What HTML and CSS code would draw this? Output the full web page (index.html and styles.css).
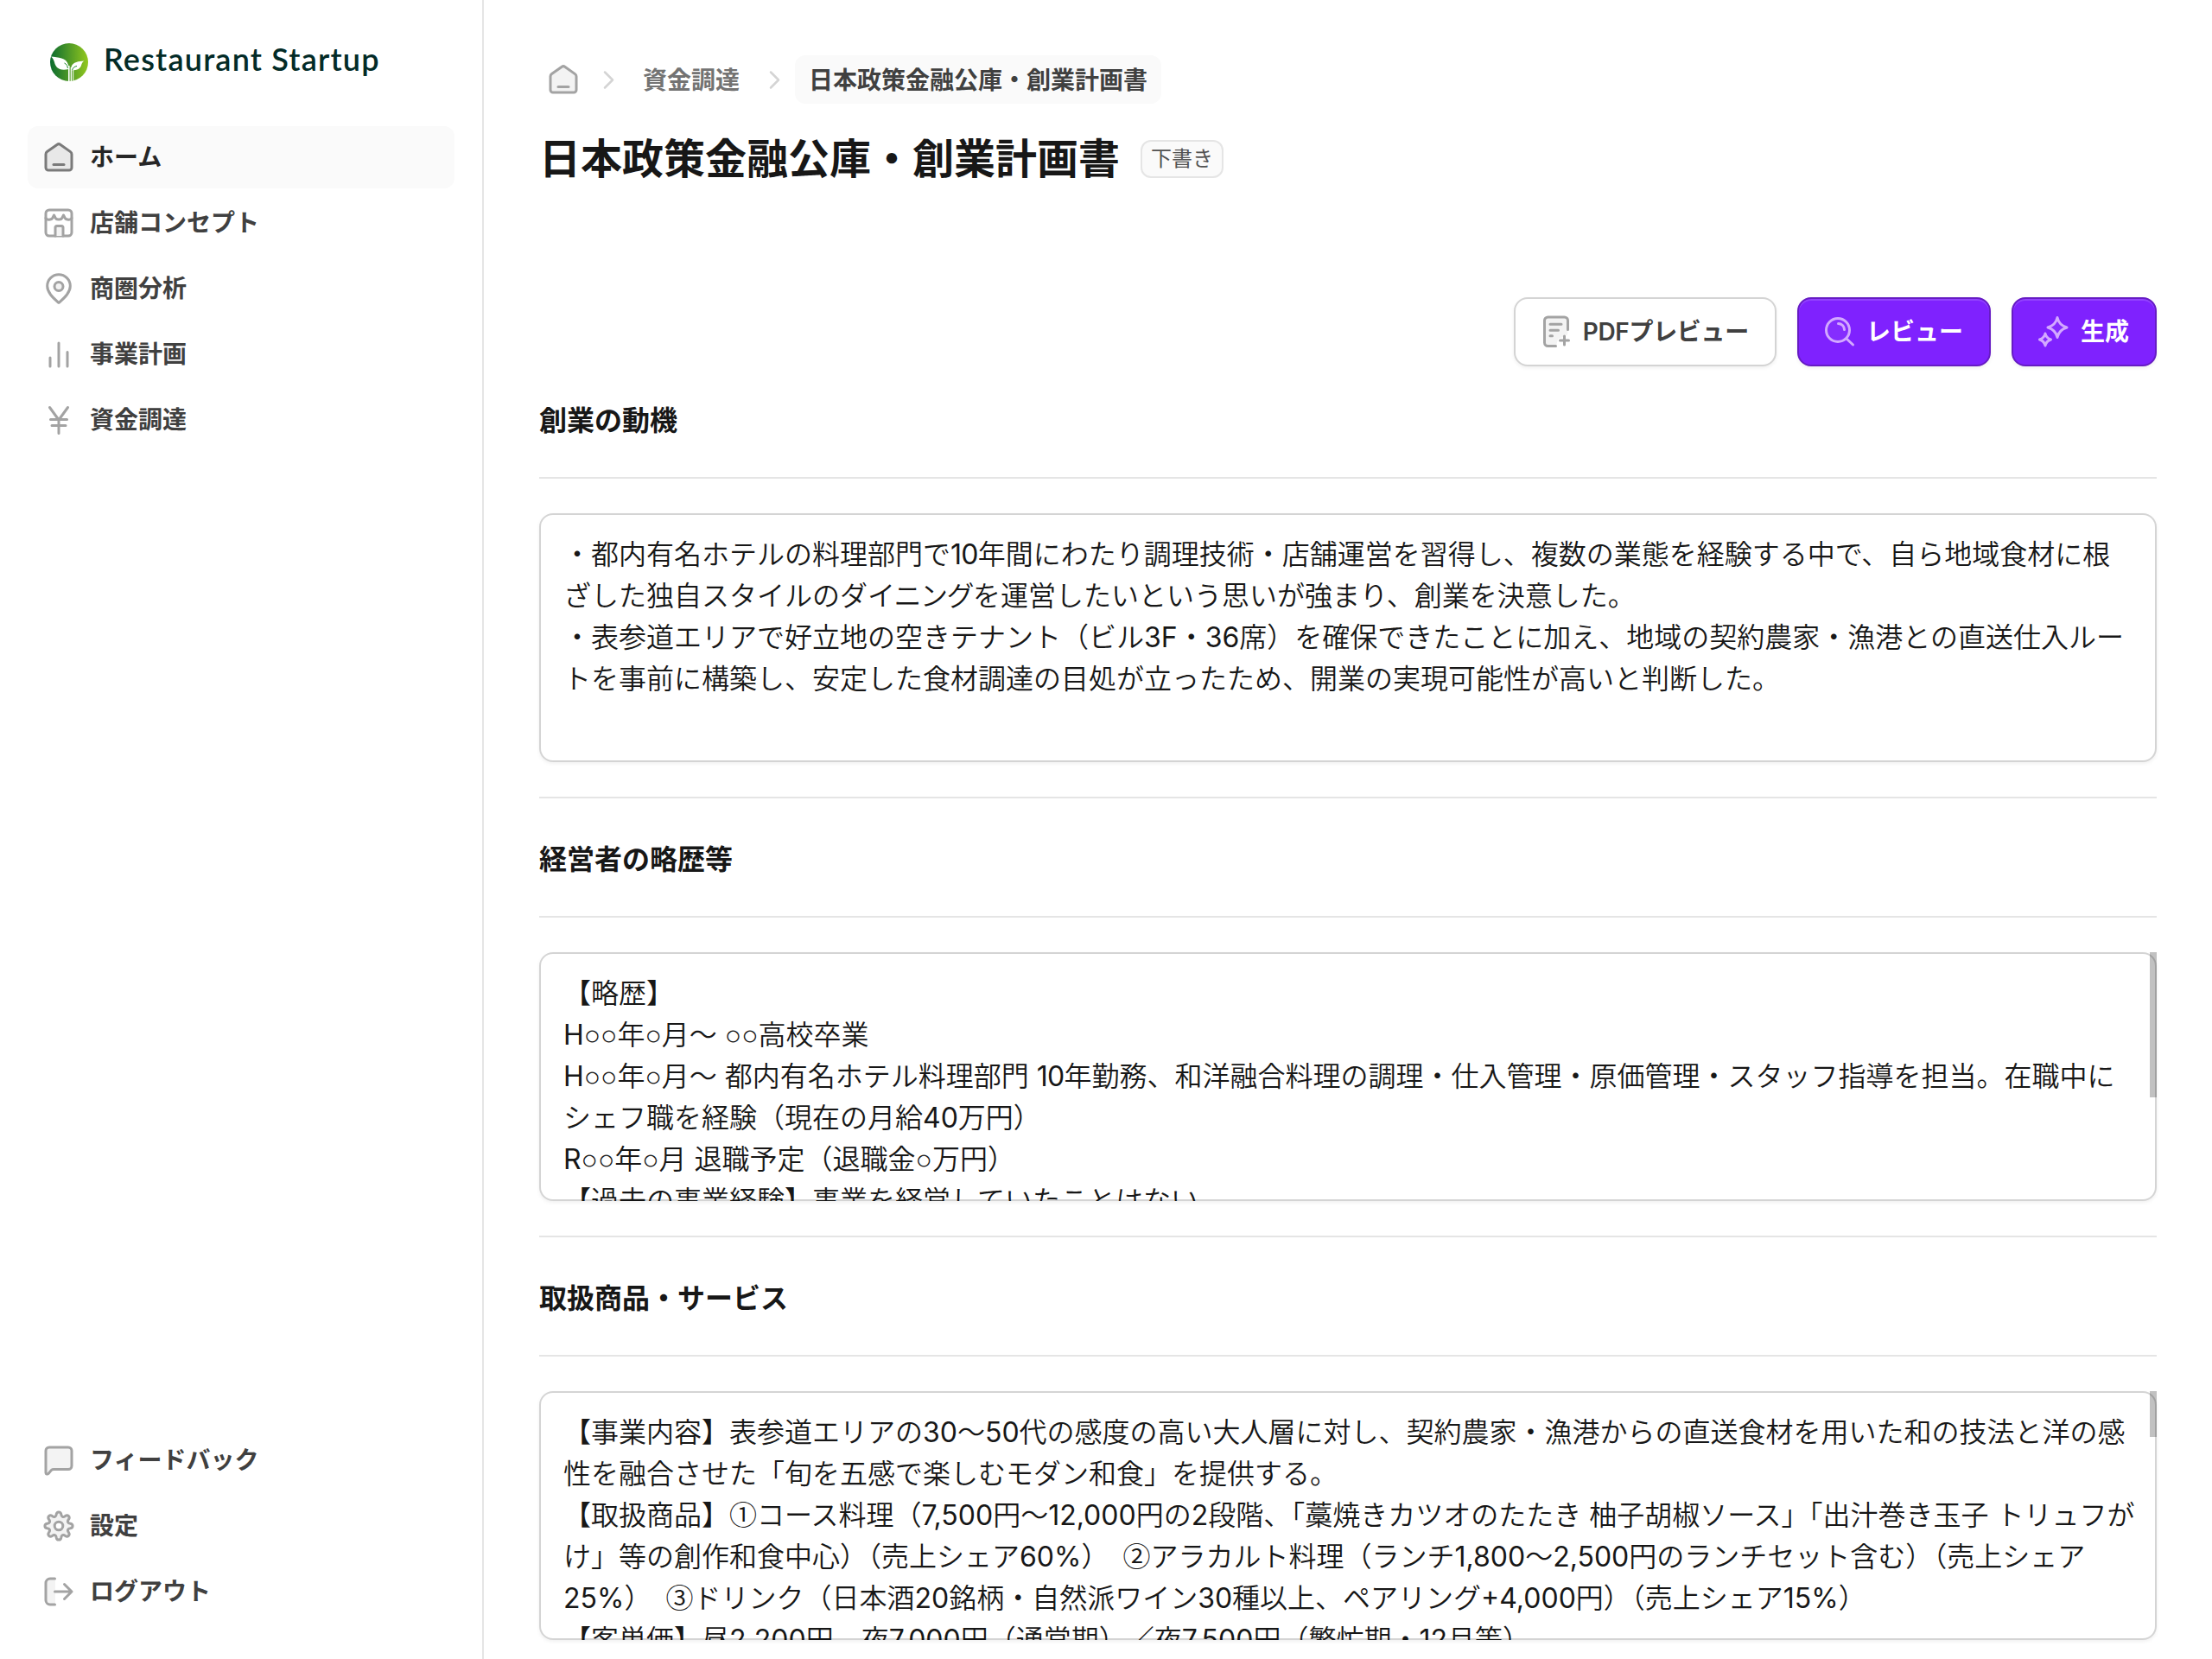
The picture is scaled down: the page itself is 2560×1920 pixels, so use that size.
FILE: index.html
```html
<!DOCTYPE html>
<html lang="ja">
<head>
    <meta charset="UTF-8">
    <meta name="viewport" content="width=device-width, initial-scale=1.0">
    <title>日本政策金融公庫・創業計画書 | Restaurant Startup</title>
    <link rel="stylesheet" href="styles.css">
</head>
<body>
    <div class="layout">
        <aside class="sidebar">
            <a class="brand" href="#">
                <svg class="brand-logo" viewBox="0 0 44 44">
                    <defs>
                        <linearGradient id="leaf" x1="0" y1="0" x2="1" y2="0">
                            <stop offset="0" stop-color="#0b6b2f"/>
                            <stop offset="1" stop-color="#93c81e"/>
                        </linearGradient>
                    </defs>
                    <circle cx="22" cy="22" r="22" fill="url(#leaf)"/>
                    <path fill="#fff" d="M1 15.500c8 1 18 1 20 9.500.5 2 .6 3.500.6 5C10 33 6 27 5 22c-.8-3-2-5-4-6.500z"/>
                    <path fill="#fff" d="M39.500 20.500c-6 .5-13.500 1-15 7-.3 1.300-.4 2.200-.4 3.500 8.500 1.500 11.500-3 12.200-6.200.6-2 1.500-3.500 3.200-4.300z"/>
                    <path fill="#fff" d="M21 26h1.600v18H21zM23.700 28h1.300v16h-1.300zM26.200 30h1v13.500h-1z"/>
                    <path fill="none" stroke="#1f8a2c" stroke-width="1" d="M16.500 23c2.500 1.200 3.700 3 3.900 6M31 26.500c-2.700.5-4.600 1.700-5.400 4.500"/>
                </svg>
                <span class="brand-name">Restaurant Startup</span>
            </a>
            <nav class="nav">
                <a class="nav-item active" href="#">
                    <svg class="icon" viewBox="0 0 40 40"><path d="M5 16.500c0-1.200.5-2.200 1.500-2.900L18.300 5.200c1-.7 2.400-.7 3.400 0l11.800 8.400c1 .7 1.500 1.700 1.500 2.900V32a3 3 0 0 1-3 3H8a3 3 0 0 1-3-3z"/><path d="M14 28.500h12"/></svg>
                    <span>ホーム</span>
                </a>
                <a class="nav-item" href="#">
                    <svg class="icon" viewBox="0 0 40 40"><rect x="5" y="5" width="30" height="30" rx="4" fill="none"/><path fill="none" d="M5 14.500c1 2.300 6.500 2.300 8-.5l1.500-3 1.500 3c1.500 2.800 6.500 2.800 8 0l1.500-3 1.500 3c1.500 2.800 7 2.800 8 .5"/><path d="M16 35v-9.500a2 2 0 0 1 2-2h5a2 2 0 0 1 2 2V35"/></svg>
                    <span>店舗コンセプト</span>
                </a>
                <a class="nav-item" href="#">
                    <svg class="icon" viewBox="0 0 40 40"><path fill="none" d="M20 36.500C14 31 6.700 25 6.700 17a13.300 13.300 0 0 1 26.600 0c0 8-7.300 14-13.300 19.500z"/><circle cx="20" cy="17.500" r="5"/></svg>
                    <span>商圏分析</span>
                </a>
                <a class="nav-item" href="#">
                    <svg class="icon" viewBox="0 0 40 40"><path d="M10 24v10M20 7v27M30 17.500V34"/></svg>
                    <span>事業計画</span>
                </a>
                <a class="nav-item" href="#">
                    <svg class="icon" viewBox="0 0 40 40"><path fill="none" d="M9.500 5.500 20 20 30.500 5.500M20 20v15.500M10.500 19.500h19M12 26.500h16"/></svg>
                    <span>資金調達</span>
                </a>
            </nav>
            <nav class="nav nav-bottom">
                <a class="nav-item" href="#">
                    <svg class="icon" viewBox="0 0 40 40"><path d="M5 9a4 4 0 0 1 4-4h22a4 4 0 0 1 4 4v17.500a4 4 0 0 1-4 4H14c-1 0-1.800.3-2.500.9L8 35.500c-1 1-3 .6-3-1z"/></svg>
                    <span>フィードバック</span>
                </a>
                <a class="nav-item" href="#">
                    <svg class="icon" viewBox="0 0 40 40"><path d="M17.200 6.600c.6-3.600 5-3.600 5.600 0 .3 3 2.400 3.800 4.700 2 3-2.100 6 .9 3.900 3.900-1.800 2.300-1 4.400 2 4.700 3.600.6 3.600 5 0 5.600-3 .3-3.800 2.400-2 4.700 2.100 3-.9 6-3.900 3.900-2.300-1.800-4.400-1-4.700 2-.6 3.600-5 3.600-5.600 0-.3-3-2.400-3.800-4.700-2-3 2.100-6-.9-3.900-3.900 1.800-2.300 1-4.400-2-4.700-3.600-.6-3.600-5 0-5.600 3-.3 3.800-2.400 2-4.700-2.100-3 .9-6 3.900-3.900 2.300 1.800 4.400 1 4.700-2z"/><circle cx="20" cy="20" r="4.800" fill="#fff"/></svg>
                    <span>設定</span>
                </a>
                <a class="nav-item" href="#">
                    <svg class="icon" viewBox="0 0 40 40"><path class="shade" d="M16 5h-7a4 4 0 0 0-4 4v22a4 4 0 0 0 4 4h7z"/><path fill="none" d="M15.500 5H10a5 5 0 0 0-5 5v20a5 5 0 0 0 5 5h5.500M15.500 20H35M26.500 11.500 35 20l-8.500 8.500"/></svg>
                    <span>ログアウト</span>
                </a>
            </nav>
        </aside>

        <main class="main">
            <nav class="breadcrumb">
                <a class="crumb crumb-home" href="#">
                    <svg class="icon" viewBox="0 0 40 40"><path d="M5 16.500c0-1.200.5-2.200 1.500-2.900L18.300 5.200c1-.7 2.400-.7 3.400 0l11.800 8.400c1 .7 1.500 1.700 1.500 2.900V32a3 3 0 0 1-3 3H8a3 3 0 0 1-3-3z"/><path d="M14 28.500h12"/></svg>
                </a>
                <svg class="chevron" viewBox="0 0 40 40"><path d="m16 11.500 9 9-9 9"/></svg>
                <a class="crumb" href="#">資金調達</a>
                <svg class="chevron" viewBox="0 0 40 40"><path d="m16 11.500 9 9-9 9"/></svg>
                <span class="crumb current">日本政策金融公庫・創業計画書</span>
            </nav>

            <header class="page-header">
                <h1>日本政策金融公庫・創業計画書</h1>
                <span class="badge">下書き</span>
            </header>

            <div class="actions">
                <button class="btn">
                    <svg class="icon" viewBox="0 0 40 40"><path class="shade" d="M34.500 18V7a4 4 0 0 0-4-4h-19a4 4 0 0 0-4 4v25.500a4 4 0 0 0 4 4H21l2-8 11-5z"/><path fill="none" d="M34.500 17.500V7a4 4 0 0 0-4-4h-19a4 4 0 0 0-4 4v25.500a4 4 0 0 0 4 4h9M14 11.300h13M14 18.300h9.500M14 24.800h2.500M30.500 25v10M25.500 30h10"/></svg>
                    <span class="pdf-label">PDFプレビュー</span>
                </button>
                <button class="btn btn-primary">
                    <svg class="icon" viewBox="0 0 40 40"><circle cx="19" cy="18" r="13.500"/><path fill="none" d="m29 28 7.500 7M19.500 10.500a7 7 0 0 1 7 7"/></svg>
                    <span>レビュー</span>
                </button>
                <button class="btn btn-primary">
                    <svg class="icon" viewBox="0 0 40 40"><path d="M25 3.500c1.300 6 4.500 9.500 11 11.500-6.500 2-9.700 5.500-11 11.500-1.300-6-4.500-9.500-11-11.500 6.500-2 9.700-5.500 11-11.500zM11 22c.8 3.800 2.800 5.700 6.500 7-3.700 1.300-5.700 3.200-6.500 7-.8-3.800-2.800-5.700-6.500-7 3.700-1.300 5.700-3.200 6.500-7z"/></svg>
                    <span>生成</span>
                </button>
            </div>

            <section class="section">
                <h2>創業の動機</h2>
                <div class="field">
                    <div class="field-text">・都内有名ホテルの料理部門で<span class="tight">10</span>年間にわたり調理技術・店舗運営を習得し、複数の業態を経験する中で、自ら地域食材に根
ざした独自スタイルのダ<span class="tight-kana">イニング</span>を運営したいという思いが強まり、創業を決意した。
・表参道エリアで好立地の空きテナント（ビル3F・36席）を確保できたことに加え、地域の契約農家・漁港との直送仕入ルー
トを事前に構築し、安定した食材調達の目処が立ったため、開業の実現可能性が高いと判断した。</div>
                </div>
            </section>

            <section class="section">
                <h2>経営者の略歴等</h2>
                <div class="field">
                    <div class="field-text">【略歴】
H<span class="blank">○○</span>年<span class="blank">○</span>月〜 <span class="blank">○○</span>高校卒業
H<span class="blank">○○</span>年<span class="blank">○</span>月〜 都内有名ホテル料理部門 <span class="tight">10</span>年勤務、和洋融合料理の調理・仕入管理・原価管理・スタッフ指導を担当。在職中に
シェフ職を経験（現在の月給40万円）
R<span class="blank">○○</span>年<span class="blank">○</span>月 退職予定（退職金<span class="blank">○</span>万円）
【過去の事業経験】事業を経営していたことはない</div>
                    <div class="scroll-thumb thumb-long"></div>
                </div>
            </section>

            <section class="section">
                <h2>取扱商品・サービス</h2>
                <div class="field">
                    <div class="field-text">【事業内容】表参道エリアの30〜50代の感度の高い大人層に対し、契約農家・漁港からの直送食材を用いた和の技法と洋の感
性を融合させた「旬を五感で楽しむモダン和食」を提供する。
【取扱商品】<span class="num">①</span>コース料理（7,500円〜12,000円の2段階、「藁焼きカツオのたたき 柚子胡椒ソース」「出汁巻き玉子 トリュフが
け」等の創作和食中心）（売上シェア60%）　<span class="num">②</span>アラカルト料理（ランチ1,800〜2,500円のランチセット含む）（売上シェア
25%）　<span class="num">③</span>ドリンク（日本酒20銘柄・自然派ワイン30種以上、ペアリング+4,000円）（売上シェア15%）
【客単価】昼2,200円、夜7,000円（通常期）／夜7,500円（繁忙期・12月等）</div>
                    <div class="scroll-thumb thumb-short"></div>
                </div>
            </section>
        </main>
    </div>
</body>
</html>
```
FILE: styles.css
```css
* {
    box-sizing: border-box;
}
body {
    margin: 0;
    height: 100vh;
    overflow: hidden;
    background: #fff;
    color: #171717;
    font-family: Inter, "Noto Sans CJK JP", sans-serif;
    font-size: 28px;
}
a {
    color: inherit;
    text-decoration: none;
}
.layout {
    display: flex;
    height: 100vh;
}

/* sidebar */
.sidebar {
    display: flex;
    flex-direction: column;
    width: 560px;
    flex-shrink: 0;
    padding: 50px 32px 42px;
    border-right: 2px solid #e5e5e5;
}
.brand {
    display: flex;
    align-items: center;
    gap: 18px;
    height: 44px;
    margin-bottom: 52px;
    padding-left: 26px;
}
.brand-logo {
    width: 44px;
    height: 44px;
}
.brand-name {
    font-family: Lato, sans-serif;
    font-size: 36px;
    font-weight: 600;
    line-height: 44px;
    letter-spacing: 1.2px;
    margin-top: -8px;
    color: #032b27;
    white-space: nowrap;
}
.nav {
    display: flex;
    flex-direction: column;
    gap: 4px;
}
.nav-bottom {
    margin-top: auto;
}
.nav-item {
    display: flex;
    align-items: center;
    gap: 16px;
    height: 72px;
    padding: 0 16px;
    border-radius: 12px;
    font-weight: 600;
    color: #404040;
}
.nav-item span,
.btn span {
    padding-bottom: 4px;
}
.nav-item.active {
    background: #fafafa;
    color: #262626;
}
.icon {
    width: 40px;
    height: 40px;
    flex-shrink: 0;
    fill: #f3f3f3;
    stroke: #a3a3a3;
    stroke-width: 3;
    stroke-linecap: round;
    stroke-linejoin: round;
}
.icon .shade {
    stroke: none;
}
.nav-item.active .icon {
    fill: #e8e8e8;
    stroke: #7a7a7a;
}

/* main column */
.main {
    flex: 1;
    min-width: 0;
    padding: 64px 64px 0;
}
.breadcrumb {
    display: flex;
    align-items: center;
    gap: 4px;
    height: 56px;
}
.crumb {
    display: flex;
    align-items: center;
    height: 56px;
    padding: 0 16px 3px;
    border-radius: 12px;
    font-weight: 600;
    color: #737373;
}
.crumb-home {
    padding: 0 8px;
}
.crumb.current {
    background: #fafafa;
    color: #404040;
}
.chevron {
    width: 40px;
    height: 40px;
    fill: none;
    stroke: #d4d4d4;
    stroke-width: 2.5;
    stroke-linecap: round;
    stroke-linejoin: round;
}
.page-header {
    display: flex;
    align-items: center;
    gap: 24px;
    height: 64px;
    margin-top: 32px;
}
.page-header h1 {
    margin: 0;
    font-size: 48px;
    line-height: 64px;
    font-weight: 700;
}
.badge {
    height: 44px;
    padding: 0 10px;
    border: 2px solid #e5e5e5;
    border-radius: 12px;
    background: #fafafa;
    color: #525252;
    font-size: 24px;
    line-height: 39px;
}
.actions {
    display: flex;
    justify-content: flex-end;
    gap: 24px;
    margin-top: 128px;
}
.btn {
    display: flex;
    align-items: center;
    gap: 12px;
    height: 80px;
    padding: 0 30px 0 26px;
    border: 2px solid #d4d4d4;
    border-radius: 16px;
    background: #fff;
    color: #404040;
    font: inherit;
    font-weight: 600;
    box-shadow: 0 2px 4px rgba(0, 0, 0, 0.06);
}
.pdf-label {
    letter-spacing: -0.3px;
}
.btn-primary {
    border-color: #661bc4;
    background: #7f22fe;
    color: #fff;
    box-shadow: inset 0 2px 0 rgba(255, 255, 255, 0.15), 0 2px 4px rgba(0, 0, 0, 0.06);
}
.btn-primary .icon {
    fill: rgba(255, 255, 255, 0.05);
    stroke: #d3a9ff;
}

/* form sections */
.section + .section {
    margin-top: 40px;
    border-top: 2px solid #e5e5e5;
}
.section h2 {
    margin: 0 0 40px;
    padding: 47px 0 41px;
    border-bottom: 2px solid #e5e5e5;
    font-size: 32px;
    line-height: 48px;
    font-weight: 700;
}
.actions + .section h2 {
    padding-top: 39px;
}
.field {
    position: relative;
    height: 288px;
    padding: 24px 28px;
    border-radius: 16px;
    box-shadow: 0 2px 4px rgba(0, 0, 0, 0.06);
}
/* outline sits above the clipped text */
.field::after {
    content: "";
    position: absolute;
    inset: 0;
    border: 2px solid rgba(0, 0, 0, 0.17);
    border-radius: 16px;
    pointer-events: none;
}
.field-text {
    height: 264px;
    margin-right: -20px;
    overflow: hidden;
    white-space: pre;
    font-family: Inter, "Noto Sans CJK JP DemiLight", "Noto Sans CJK JP", sans-serif;
    font-size: 32px;
    line-height: 48px;
}
.field-text span {
    line-height: 1;
}
.field-text .tight {
    letter-spacing: -0.8px;
}
.field-text .tight-kana {
    letter-spacing: -1.5px;
}
.field-text .blank {
    font-family: "Liberation Sans", sans-serif;
}
.field-text .num {
    font-family: "Noto Sans CJK JP DemiLight", "Noto Sans CJK JP", sans-serif;
}
.scroll-thumb {
    position: absolute;
    top: 0;
    right: 0;
    width: 8px;
    background: #c1c1c1;
}
.thumb-long {
    height: 168px;
}
.thumb-short {
    height: 53px;
}
```
